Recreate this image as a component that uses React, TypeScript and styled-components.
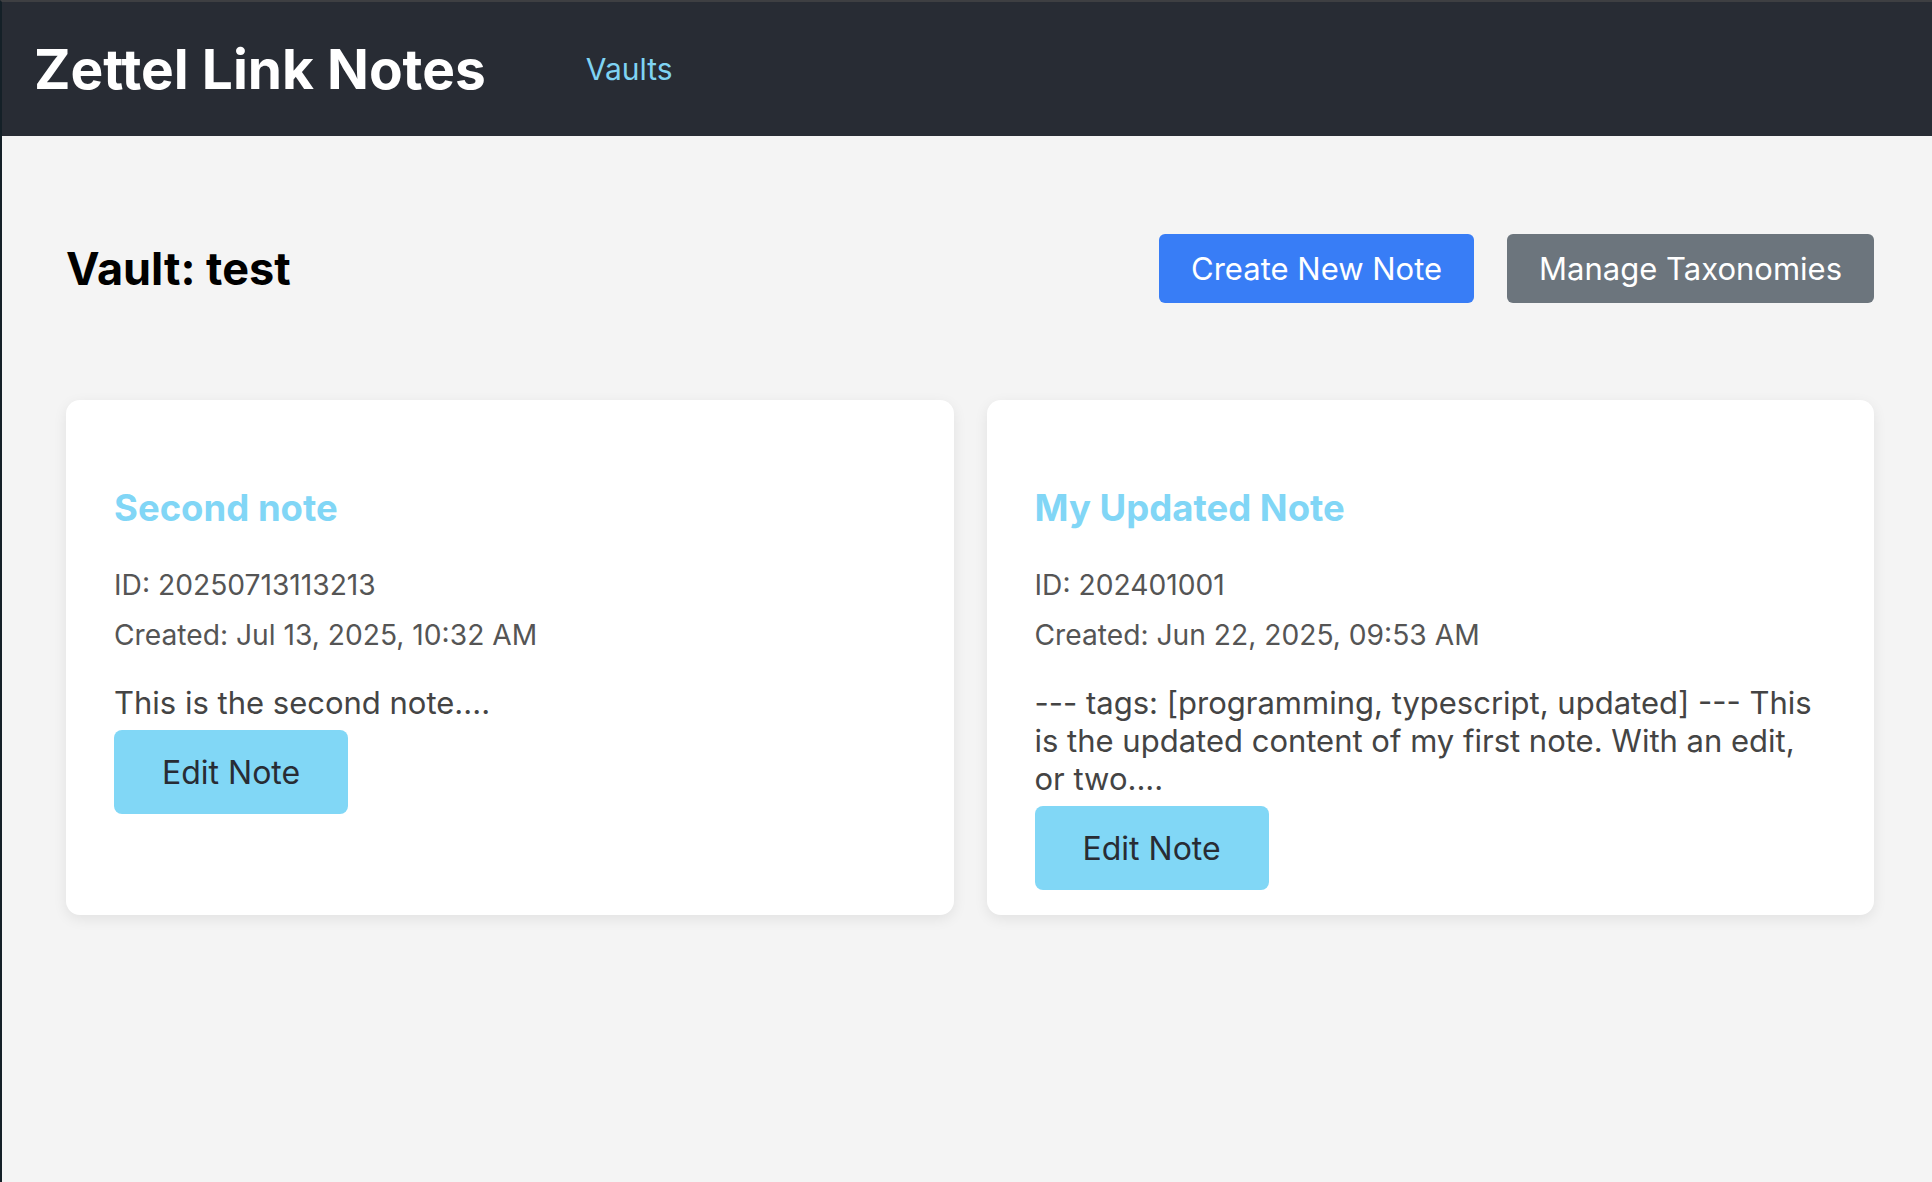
import styled, { createGlobalStyle } from "styled-components";

const GlobalStyle = createGlobalStyle`
  html, body {
    margin: 0;
    padding: 0;
    background: #f4f4f4;
  }
  body {
    font-family: Inter, "Noto Sans", "Liberation Sans", sans-serif;
    font-size: 24px;
  }
  * {
    box-sizing: border-box;
  }
`;

const Frame = styled.div`
  min-height: 1182px;
  border-left: 2px solid #142027;
  border-top: 2px solid #3e3f42;
  background: #f4f4f4;
`;

const Header = styled.header`
  background: #282c34;
  height: 134px;
  display: flex;
  align-items: center;
  padding: 0 32px;
  gap: 100px;
`;

const Brand = styled.h1`
  margin: 0;
  color: #fff;
  font-size: 55px;
  font-weight: 700;
`;

const NavLink = styled.a`
  color: #7fd3f3;
  font-size: 30px;
  text-decoration: none;
`;

const Main = styled.main`
  padding: 98px 58px 64px 64px;
`;

const TopBar = styled.div`
  display: flex;
  align-items: center;
  justify-content: space-between;
  margin-bottom: 97px;
`;

const VaultTitle = styled.h2`
  margin: 0;
  font-size: 45px;
  font-weight: 700;
  color: #000;
`;

const Actions = styled.div`
  display: flex;
  gap: 33px;
`;

const ActionButton = styled.button<{ $tone: "primary" | "secondary" }>`
  border: none;
  border-radius: 6px;
  height: 69px;
  padding: 0 32px;
  font-family: inherit;
  font-size: 31px;
  color: #fff;
  background: ${({ $tone }) => ($tone === "primary" ? "#387df6" : "#6c757d")};
  cursor: pointer;
`;

const Grid = styled.div`
  display: grid;
  grid-template-columns: 1fr 1fr;
  gap: 33px;
`;

const Card = styled.div`
  background: #fff;
  border-radius: 14px;
  box-shadow: 0 4px 14px rgba(0, 0, 0, 0.08);
  padding: 50px 48px 25px;
`;

const NoteTitle = styled.h3`
  margin: 36px 0 38px;
  font-size: 36.5px;
  font-weight: 700;
  color: #81d6f6;
`;

const Meta = styled.p`
  margin: 16px 0;
  font-size: 28.2px;
  color: #555;
`;

const Excerpt = styled.p`
  margin: 32px 0 0;
  font-size: 31px;
  line-height: 38px;
  color: #444;
`;

const EditButton = styled.button`
  margin-top: 8px;
  border: none;
  border-radius: 8px;
  height: 84px;
  padding: 0 48px;
  font-family: inherit;
  font-size: 32px;
  color: #282c34;
  background: #81d7f6;
  cursor: pointer;
`;

type Note = { title: string; id: string; created: string; excerpt: string };

const notes: Note[] = [
  {
    title: "Second note",
    id: "20250713113213",
    created: "Jul 13, 2025, 10:32 AM",
    excerpt: "This is the second note....",
  },
  {
    title: "My Updated Note",
    id: "202401001",
    created: "Jun 22, 2025, 09:53 AM",
    excerpt:
      "--- tags: [programming, typescript, updated] --- This is the updated content of my first note. With an edit, or two....",
  },
];

export default function App() {
  return (
    <>
      <GlobalStyle />
      <Frame>
        <Header>
          <Brand>Zettel Link Notes</Brand>
          <NavLink href="#">Vaults</NavLink>
        </Header>
        <Main>
          <TopBar>
            <VaultTitle>Vault: test</VaultTitle>
            <Actions>
              <ActionButton $tone="primary">Create New Note</ActionButton>
              <ActionButton $tone="secondary">Manage Taxonomies</ActionButton>
            </Actions>
          </TopBar>
          <Grid>
            {notes.map((n) => (
              <Card key={n.id}>
                <NoteTitle>{n.title}</NoteTitle>
                <Meta>ID: {n.id}</Meta>
                <Meta>Created: {n.created}</Meta>
                <Excerpt>{n.excerpt}</Excerpt>
                <EditButton>Edit Note</EditButton>
              </Card>
            ))}
          </Grid>
        </Main>
      </Frame>
    </>
  );
}
